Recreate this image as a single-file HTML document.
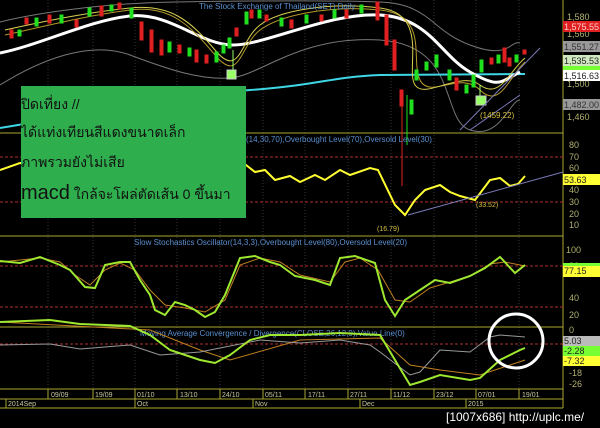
<!DOCTYPE html><html><head><meta charset="utf-8"><style>
body{margin:0;background:#000;width:600px;height:428px;overflow:hidden;font-family:"Liberation Sans",sans-serif}
.box{position:absolute;left:21px;top:86px;width:225px;height:132px;background:#2fae4e;font-family:"Liberation Sans","Noto Sans CJK SC",sans-serif;color:#111}
</style></head><body>
<svg width="600" height="428" style="position:absolute;left:0;top:0" font-family="Liberation Sans">
<g stroke="#333" stroke-dasharray="1,2">
<line x1="48" y1="0" x2="48" y2="389"/><line x1="93" y1="0" x2="93" y2="389"/><line x1="135" y1="0" x2="135" y2="389"/><line x1="177" y1="0" x2="177" y2="389"/><line x1="220" y1="0" x2="220" y2="389"/><line x1="263" y1="0" x2="263" y2="389"/><line x1="305" y1="0" x2="305" y2="389"/><line x1="348" y1="0" x2="348" y2="389"/><line x1="391" y1="0" x2="391" y2="389"/><line x1="434" y1="0" x2="434" y2="389"/><line x1="476" y1="0" x2="476" y2="389"/><line x1="519" y1="0" x2="519" y2="389"/>
</g>
<g stroke="#a9a832" stroke-width="1" fill="none">
<line x1="0" y1="133" x2="563" y2="133"/><line x1="0" y1="236" x2="563" y2="236"/><line x1="0" y1="327" x2="563" y2="327"/>
<line x1="0" y1="389" x2="563" y2="389"/><line x1="0" y1="399" x2="563" y2="399"/><line x1="0" y1="408" x2="563" y2="408"/>
<line x1="563" y1="0" x2="563" y2="408"/><line x1="6" y1="399" x2="6" y2="408"/>
<line x1="48" y1="389" x2="48" y2="399"/><line x1="93" y1="389" x2="93" y2="399"/><line x1="135" y1="389" x2="135" y2="408"/><line x1="177" y1="389" x2="177" y2="399"/><line x1="220" y1="389" x2="220" y2="399"/><line x1="253" y1="399" x2="253" y2="408"/><line x1="263" y1="389" x2="263" y2="399"/><line x1="305" y1="389" x2="305" y2="399"/><line x1="348" y1="389" x2="348" y2="399"/><line x1="360" y1="399" x2="360" y2="408"/><line x1="391" y1="389" x2="391" y2="399"/><line x1="434" y1="389" x2="434" y2="399"/><line x1="466" y1="399" x2="466" y2="408"/><line x1="476" y1="389" x2="476" y2="399"/><line x1="519" y1="389" x2="519" y2="399"/>
</g>
<g font-size="7" fill="#c8c8a0">
<text x="51" y="397">09/09</text><text x="95" y="397">19/09</text><text x="137" y="397">01/10</text><text x="180" y="397">13/10</text><text x="222" y="397">24/10</text><text x="265" y="397">05/11</text><text x="308" y="397">17/11</text><text x="350" y="397">27/11</text><text x="393" y="397">11/12</text><text x="436" y="397">23/12</text><text x="478" y="397">07/01</text><text x="522" y="397">19/01</text>
<text x="8" y="406">2014Sep</text><text x="137" y="406">Oct</text><text x="255" y="406">Nov</text><text x="362" y="406">Dec</text><text x="468" y="406">2015</text>
</g>
<!-- price panel -->
<g stroke="#777" fill="none" stroke-width="1">
<path d="M0,22 C40,12 100,5 145,3 S330,0 380,2 S430,30 470,45 S510,40 520,43"/>
<path d="M0,85 C40,60 90,40 130,55 S200,80 230,78 S300,35 380,40 S440,120 470,130 S510,100 520,100"/>
</g>
<path d="M0,128 C80,115 180,95 250,90 S330,77 380,75 L525,74" stroke="#3fd6e6" stroke-width="2" fill="none"/>
<path d="M0,53 C40,45 90,20 130,16 S200,45 233,45 S330,12 380,15 S440,55 470,72 S500,82 520,72" stroke="#fff" stroke-width="3" fill="none"/>
<path d="M5,35 C50,25 90,15 130,10 S190,25 215,55 S240,45 260,30 S330,5 380,10 S410,60 420,80 S460,70 480,90 S510,75 525,62" stroke="#b49a2a" fill="none"/>
<path d="M5,30 C50,20 90,12 130,8 S190,20 215,50 S240,40 260,25 S330,2 380,8 S405,70 415,85 S460,70 480,85 S510,70 525,58" stroke="#d8d050" fill="none"/>
<g stroke-width="1">
<g stroke="#e02020" fill="#e02020">
<rect x="10" y="30" width="3" height="8"/><rect x="25" y="18" width="3" height="6"/><rect x="48" y="15" width="3" height="8"/><rect x="75" y="20" width="3" height="7"/><rect x="100" y="6" width="3" height="10"/><rect x="118" y="3" width="3" height="6"/><rect x="140" y="22" width="3" height="18"/><rect x="150" y="30" width="3" height="22"/><rect x="160" y="40" width="3" height="15"/><rect x="178" y="45" width="3" height="8"/><rect x="195" y="50" width="3" height="12"/><rect x="205" y="55" width="3" height="8"/><rect x="235" y="28" width="3" height="8"/><rect x="250" y="10" width="3" height="8"/><rect x="265" y="15" width="3" height="6"/><rect x="290" y="20" width="3" height="8"/><rect x="320" y="15" width="3" height="6"/><rect x="345" y="10" width="3" height="8"/><rect x="376" y="2" width="3" height="18"/><rect x="385" y="15" width="3" height="30"/><rect x="393" y="40" width="3" height="30"/><rect x="400" y="90" width="3" height="16"/><rect x="455" y="78" width="3" height="12"/><rect x="490" y="58" width="3" height="6"/><rect x="503" y="48" width="3" height="14"/><rect x="508" y="58" width="3" height="8"/><rect x="523" y="50" width="3" height="4"/>
</g>
<g stroke="#20e020" fill="#20e020">
<rect x="18" y="30" width="3" height="6"/><rect x="35" y="18" width="3" height="8"/><rect x="60" y="15" width="3" height="8"/><rect x="88" y="8" width="3" height="8"/><rect x="110" y="5" width="3" height="6"/><rect x="130" y="8" width="3" height="10"/><rect x="168" y="42" width="3" height="10"/><rect x="188" y="48" width="3" height="8"/><rect x="215" y="52" width="3" height="10"/><rect x="222" y="45" width="3" height="8"/><rect x="228" y="38" width="3" height="10"/><rect x="245" y="12" width="3" height="12"/><rect x="258" y="10" width="3" height="8"/><rect x="280" y="18" width="3" height="8"/><rect x="305" y="15" width="3" height="8"/><rect x="333" y="10" width="3" height="8"/><rect x="360" y="5" width="3" height="8"/><rect x="410" y="100" width="3" height="14"/><rect x="415" y="70" width="3" height="10"/><rect x="425" y="62" width="3" height="8"/><rect x="435" y="55" width="3" height="12"/><rect x="448" y="70" width="3" height="10"/><rect x="465" y="85" width="3" height="8"/><rect x="472" y="75" width="3" height="12"/><rect x="480" y="60" width="3" height="12"/><rect x="497" y="55" width="3" height="8"/><rect x="515" y="55" width="3" height="7"/>
</g>
<line x1="402" y1="95" x2="402" y2="186" stroke="#e02020"/><line x1="407" y1="95" x2="407" y2="145" stroke="#20e020"/>
<line x1="233" y1="50" x2="233" y2="72" stroke="#9f6"/><line x1="480" y1="85" x2="480" y2="100" stroke="#9f6"/>
<rect x="227" y="70" width="9" height="9" fill="#9f6" stroke="#ccc"/><rect x="476" y="96" width="10" height="9" fill="#9f6" stroke="#ccc"/>
</g>
<path d="M460,130 L540,48" stroke="#7a7ab8" fill="none"/><path d="M470,130 L520,95" stroke="#7a7ab8" fill="none"/>
<text x="480" y="118" font-size="8" fill="#d8c040">(1459.22)</text>
<text x="199" y="9" font-size="8" fill="#5a8fd0">The Stock Exchange of Thailand(SET) Daily</text>
<!-- RSI -->
<g stroke="#b03030" stroke-dasharray="3,2"><line x1="0" y1="157" x2="563" y2="157"/><line x1="0" y1="202" x2="563" y2="202"/><line x1="0" y1="344" x2="563" y2="344"/><line x1="0" y1="266" x2="563" y2="266"/><line x1="0" y1="307" x2="563" y2="307"/></g>
<text x="246" y="142" font-size="8" fill="#5a8fd0">(14,30,70),Overbought Level(70),Oversold Level(30)</text>
<path d="M0,170 L20,163 L246,165 L255,172 L265,170 L275,180 L290,176 L300,182 L315,175 L325,180 L340,170 L350,175 L370,168 L378,170 L395,205 L405,215 L415,200 L425,190 L440,185 L450,192 L460,196 L475,200 L490,180 L500,178 L510,186 L518,184 L525,176" stroke="#ffff30" stroke-width="2" fill="none"/>
<path d="M408,215 L563,172" stroke="#7a7ab8"/>
<text x="377" y="231" font-size="7" fill="#d8c040">(16.79)</text><text x="476" y="207" font-size="7" fill="#d8c040">(33.52)</text>
<!-- Stoch -->
<text x="134" y="245" font-size="8" fill="#5a8fd0">Slow Stochastics Oscillator(14,3,3),Overbought Level(80),Oversold Level(20)</text>
<path d="M0,262 L40,258 L60,262 L75,275 L90,285 L105,270 L120,263 L135,270 L150,290 L165,305 L185,308 L205,312 L225,300 L240,265 L260,258 L280,262 L300,275 L330,282 L345,262 L360,258 L378,270 L395,300 L410,302 L430,288 L450,282 L470,276 L490,264 L505,262 L525,266" stroke="#c08020" fill="none"/>
<path d="M0,261 L20,263 L40,257 L60,265 L70,270 L85,287 L95,288 L105,265 L120,262 L130,262 L140,280 L150,295 L155,310 L165,315 L175,302 L185,305 L195,310 L205,317 L215,312 L225,295 L240,258 L255,256 L270,262 L280,265 L295,276 L315,280 L330,285 L340,258 L355,256 L375,263 L385,300 L395,316 L405,300 L420,290 L435,280 L450,283 L470,276 L485,268 L500,257 L515,273 L525,265" stroke="#9fe830" stroke-width="2" fill="none"/>
<!-- MACD -->
<text x="140" y="336" font-size="8" fill="#5a8fd0">Moving Average Convergence / Divergence(CLOSE,26,12,9),Value Line(0)</text>
<path d="M0,322 L150,330 L200,350 L230,360 L300,340 L380,338 L410,365 L440,370 L480,375 L525,360" stroke="#c08020" fill="none"/>
<path d="M0,345 L50,344 L80,349 L130,345 L160,355 L200,352 L260,340 L300,343 L340,340 L370,345 L380,352 L410,375 L420,372 L440,350 L470,352 L490,337 L500,335 L525,337" stroke="#999" fill="none"/>
<path d="M0,322 L50,320 L80,324 L130,326 L150,335 L170,350 L200,360 L215,363 L230,355 L250,340 L270,335 L300,335 L340,333 L380,335 L395,360 L410,385 L420,382 L440,375 L470,380 L480,378 L500,360 L520,350 L525,348" stroke="#9fe830" stroke-width="2" fill="none"/>
<circle cx="516" cy="341" r="27" stroke="#fff" stroke-width="3" fill="none"/>
<!-- axis labels -->
<g font-size="9" fill="#b0b070">
<text x="567" y="20">1,580</text><text x="567" y="37">1,560</text><text x="567" y="87">1,500</text><text x="567" y="120">1,460</text>
<text x="569" y="148">80</text><text x="569" y="160">70</text><text x="569" y="171">60</text><text x="569" y="193">40</text><text x="569" y="205">30</text><text x="569" y="217">20</text><text x="569" y="228">10</text>
<text x="566" y="253">100</text><text x="569" y="269">80</text><text x="569" y="301">40</text><text x="569" y="318">20</text><text x="569" y="333">0</text>
<text x="569" y="376">-18</text><text x="569" y="387">-26</text>
</g>
<g font-size="9">
<rect x="563" y="21" width="37" height="11" fill="#e02020"/><text x="564" y="30" fill="#fcc">1,575.55</text>
<rect x="563" y="41" width="37" height="11" fill="#999"/><text x="564" y="50" fill="#333">1,551.27</text>
<rect x="563" y="55" width="37" height="11" fill="#cfe8c0"/><text x="564" y="64" fill="#222">1,535.53</text>
<rect x="563" y="66" width="37" height="4" fill="#7f3"/>
<rect x="563" y="70" width="37" height="11" fill="#fff"/><text x="564" y="79" fill="#222">1,516.63</text>
<rect x="563" y="99" width="37" height="11" fill="#999"/><text x="564" y="108" fill="#333">1,482.00</text>
<rect x="563" y="174" width="37" height="11" fill="#ff3"/><text x="564" y="183" fill="#222">53.63</text>
<rect x="563" y="265" width="37" height="12" fill="#ff3"/><rect x="563" y="263" width="37" height="3" fill="#7f3"/><text x="564" y="274" fill="#222">77.15</text>
<rect x="563" y="336" width="37" height="10" fill="#bbb"/><text x="564" y="344" fill="#222">5.03</text>
<rect x="563" y="346" width="37" height="10" fill="#7f3"/><text x="564" y="354" fill="#222">-2.28</text>
<rect x="563" y="356" width="37" height="10" fill="#ff3"/><text x="564" y="364" fill="#222">-7.32</text>
</g>
<text x="446" y="421" font-size="12" fill="#fff">[1007x686] http://uplc.me/</text>
</svg>
<div class="box">
<div style="position:absolute;left:0;top:8px;font-size:14px">ปิดเที่ยง //</div>
<div style="position:absolute;left:0;top:36px;font-size:14px">ได้แท่งเทียนสีแดงขนาดเล็ก</div>
<div style="position:absolute;left:0;top:66px;font-size:14px">ภาพรวมยังไม่เสีย</div>
<div style="position:absolute;left:0;top:96px;font-size:14px"><span style="font-size:20px">macd</span> ใกล้จะโผล่ตัดเส้น 0 ขึ้นมา</div>
</div>
</body></html>
